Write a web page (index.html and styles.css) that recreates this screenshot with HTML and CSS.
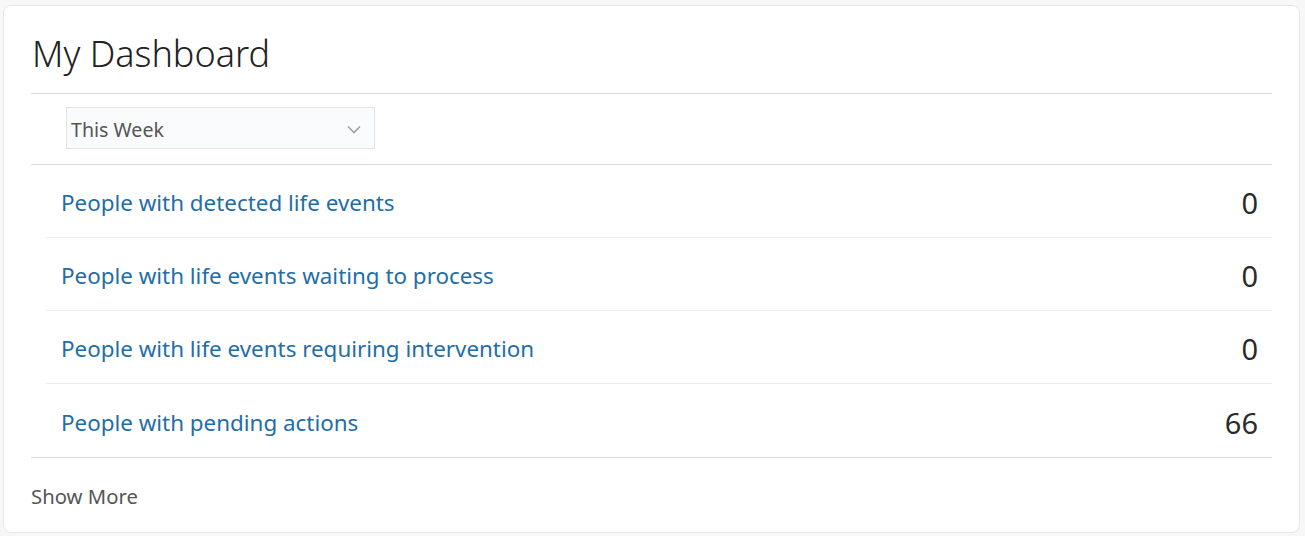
FILE: index.html
```html
<!DOCTYPE html>
<html>
<head>
<meta charset="utf-8">
<link rel="stylesheet" href="styles.css">
</head>
<body>
<div class="card">
  <h1 class="title">My Dashboard</h1>
  <div class="filter">
    <div class="select">
      <span class="select-text">This Week</span>
      <svg class="chev" width="14" height="9" viewBox="0 0 14 9"><path d="M1 1.5 L7 7.5 L13 1.5" fill="none" stroke="#a0a0a0" stroke-width="1.6"/></svg>
    </div>
  </div>
  <ul class="rows">
    <li class="row"><a class="link">People with detected life events</a><span class="num">0</span></li>
    <li class="row"><a class="link">People with life events waiting to process</a><span class="num">0</span></li>
    <li class="row"><a class="link">People with life events requiring intervention</a><span class="num">0</span></li>
    <li class="row"><a class="link">People with pending actions</a><span class="num">66</span></li>
  </ul>
  <div class="more">Show More</div>
</div>
</body>
</html>
```
FILE: styles.css
```css
html, body { margin: 0; padding: 0; }
body {
  background: #f7f7f7;
  font-family: "Noto Sans", "Open Sans", sans-serif;
  width: 1305px;
  height: 536px;
  overflow: hidden;
}
.card {
  margin: 5px 5px 0 3px;
  height: 528px;
  box-sizing: border-box;
  background: #fff;
  border-radius: 8px;
  border: 1px solid #e8e8e8;
  padding: 0 27px 0 27px;
}
.title {
  margin: 0;
  height: 88px;
  box-sizing: border-box;
  padding: 26px 0 0 1px;
  font-size: 36px;
  font-weight: 300;
  color: #222;
  line-height: 44px;
  border-bottom: 1px solid #dcdcdc;
}
.filter {
  height: 71px;
  box-sizing: border-box;
  padding: 13px 0 0 35px;
  border-bottom: 1px solid #dcdcdc;
}
.select {
  width: 309px;
  height: 42px;
  box-sizing: border-box;
  border: 1px solid #dfe3e8;
  background: #fafbfd;
  display: flex;
  align-items: center;
  justify-content: space-between;
  padding: 2px 13px 0 4px;
}
.select-text {
  font-size: 19.6px;
  color: #555;
}
.chev { display: block; }
.rows {
  list-style: none;
  margin: 0;
  padding: 0;
  border-bottom: 1px solid #d6d6d6;
}
.row {
  margin-left: 15px;
  height: 73px;
  box-sizing: border-box;
  display: flex;
  align-items: center;
  justify-content: space-between;
  padding: 3px 14px 0 15px;
  border-bottom: 1px solid #ececec;
}
.row:last-child { border-bottom: none; }
.link {
  font-size: 22.4px;
  color: #1f6ea7;
}
.num {
  font-size: 29px;
  color: #2b2b2b;
}
.more {
  padding: 24px 0 0 0;
  font-size: 20.3px;
  color: #555;
}
```
